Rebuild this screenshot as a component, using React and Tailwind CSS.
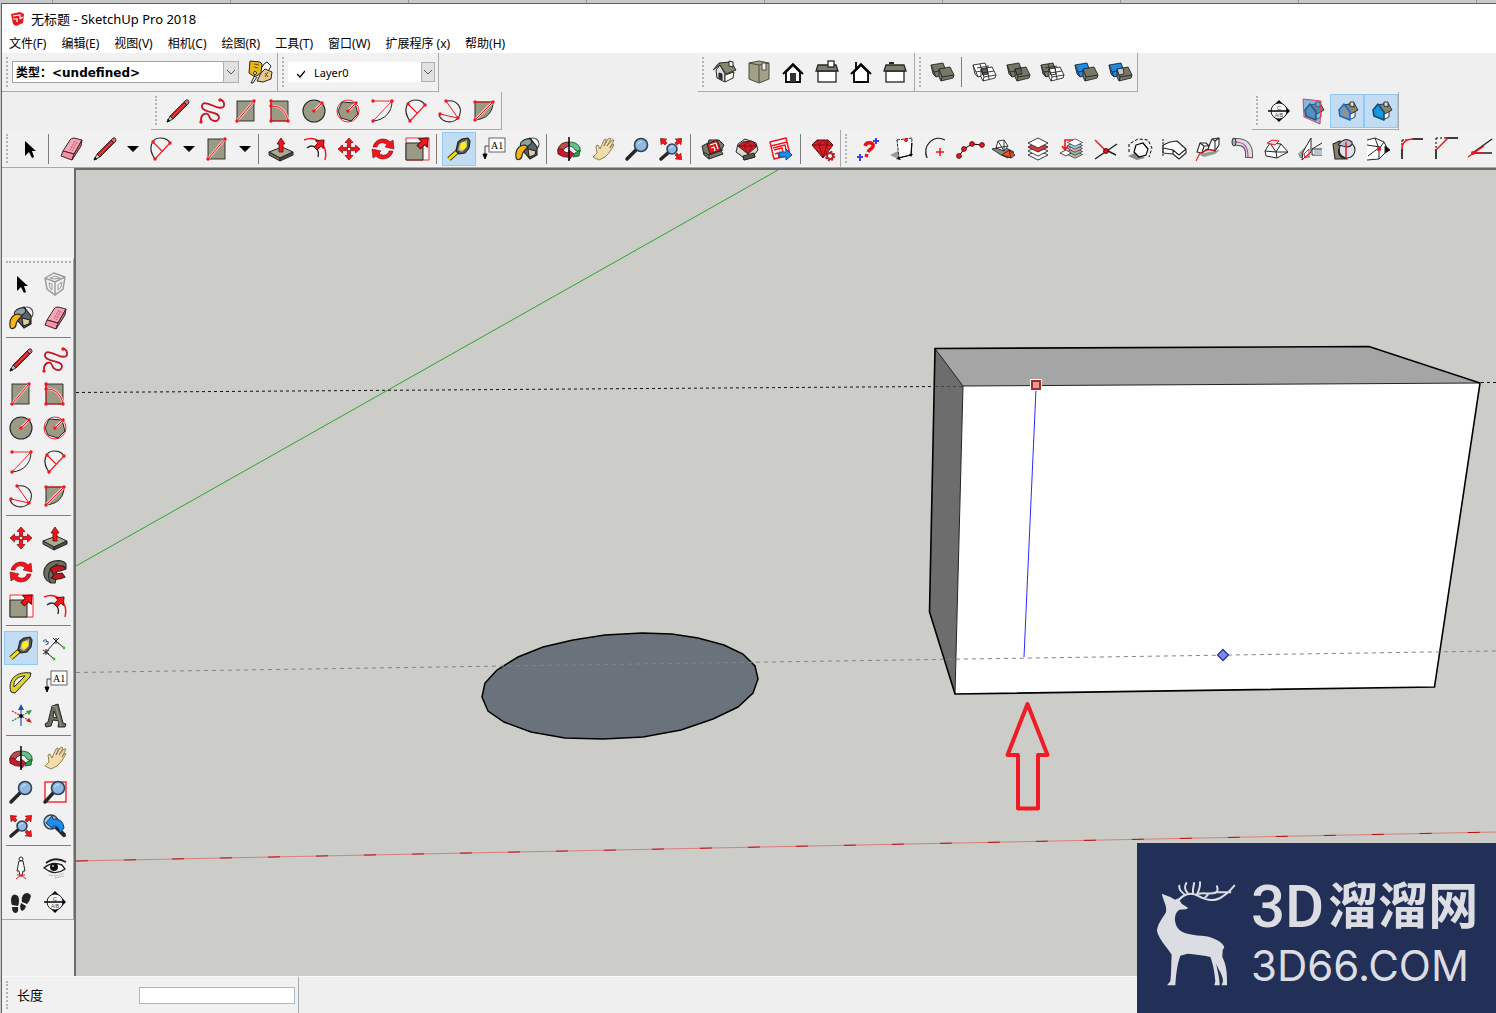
import React, { useState } from "react";

const RED = "#f5141e";
const CLAY = "#9b9a85";
const INK = "#262626";

const Dots = ({ points }) =>
  points.map(([x, y]) => <circle key={`${x},${y}`} cx={x} cy={y} r="1.7" fill={RED} />);

const Arrow = ({ turn = 0, x = 0, y = 0 }) => (
  <path
    transform={`translate(${x} ${y}) rotate(${turn})`}
    d="M0 -6 L5 0 L2 0 L2 5 L-2 5 L-2 0 L-5 0 Z"
    fill={RED}
    stroke="#5a0a0a"
    strokeWidth="0.8"
  />
);

const Lens = ({ x = 3, y = -3, r = 6 }) => (
  <g>
    <path d={`M${x - r * 0.7} ${y + r * 0.7} L-10 10`} stroke={INK} strokeWidth="3.5" strokeLinecap="round" />
    <circle cx={x} cy={y} r={r} fill="#8fb9e0" stroke="#2d4257" strokeWidth="1.6" />
    <path d={`M${x - r * 0.5} ${y - r * 0.1} Q${x - r * 0.3} ${y - r * 0.6} ${x + 1} ${y - r * 0.5}`} fill="none" stroke="#d5e8f8" />
  </g>
);

// two overlapping solids used by the solid tools toolbar
const Solids = ({ a = "#77776a", b = "#77776a", mid, wire }) => (
  <g stroke={INK} strokeWidth="0.9" strokeLinejoin="round">
    <path d="M-11 -7 L1 -9 L4 -1 L4 2 L-6 5 L-9 2 Z" fill={a} />
    <path d="M-11 -7 L-8 0 L3 -2 M-8 0 L-6 5" fill="none" />
    <path d="M-3 -3 L8 -5 L12 3 L11 6 L-1 9 L-3 5 Z" fill={b} />
    <path d="M-3 -3 L0 5 L12 3 M0 5 L-1 9" fill="none" />
    {mid && <path d="M-3 -3 L3 -4 L4 2 L-1 3 Z" fill={mid} />}
    {wire && <path d="M-7 -4 L5 -6 M-4 -8 L-1 3 M3 -4 L5 7 M-2 1 L10 -1" fill="none" />}
  </g>
);

const SectionHouse = ({ front, edge }) => (
  <g strokeLinejoin="round">
    <path d="M3 1 L8 -1 L8 6 L2 9 Z" fill="#fff" stroke={INK} strokeWidth="0.9" />
    <path d="M-3 -6 L7 -8 L11 -1 L4 3 Z" fill="#87866f" stroke={INK} strokeWidth="0.9" />
    <path d="M3 -9 L7 -9 L7 -4 L3 -5 Z" fill="#ddd" stroke={INK} strokeWidth="0.9" />
    <path d="M-8 -1 L-3 -7 L3 1 L3 9 L-7 5 Z" fill={front} stroke={edge} strokeWidth="1.6" />
  </g>
);

const Sheets = ({ fills }) => (
  <g stroke={INK} strokeWidth="0.9">
    {fills.map((fill, i) => (
      <path key={i} d={`M-10 ${6 - i * 4} L0 ${1 - i * 4} L10 ${6 - i * 4} L0 ${11 - i * 4} Z`} fill={fill} />
    ))}
  </g>
);

const ICONS = {
  select: <path d="M-4 -8 L-4 7 L0 3 L3 9 L5 8 L3 2 L7 2 Z" fill="#000" />,
  component: (
    <g fill="none" stroke="#9a9a9a" strokeWidth="1.4">
      <path d="M-10 -6 L-1 -11 L10 -7 L8 5 L0 11 L-8 5 Z M-10 -6 L0 -2 L10 -7 M0 -2 L0 11" />
      <path d="M-6 -1 L-5 4 L-3 6 L-3 0 Z M3 1 L7 -2 L6 3 L3 6 Z M-5 -6 L0 -8 L5 -6 L0 -5 Z" strokeWidth="1" />
    </g>
  ),
  paint: (
    <g strokeWidth="1.2" stroke={INK}>
      <circle cx="6" cy="-5" r="6" fill="none" stroke="#555" />
      <path d="M-6 -6 L3 -11 L10 -2 L10 6 L3 10 L-3 3 Z" fill="#5b6568" />
      <ellipse cx="-1" cy="-6" rx="6" ry="3.5" fill="#8b9fa4" transform="rotate(-25 -1 -6)" />
      <path d="M1 0 L9 2 L8 6 L2 8 Z" fill="#d9cfa0" />
      <path d="M-2 -4 C-8 -4 -12 1 -11 8 C-11 12 -6 11 -5 7 C-5 3 -2 1 1 -2 Z" fill="#fab410" />
    </g>
  ),
  eraser: (
    <g stroke="#3a2529" strokeWidth="1" strokeLinejoin="round">
      <path d="M-1 -9 Q0 -11 3 -11 L11 -9 L3 5 L-8 2 Z" fill="#f7a5b6" />
      <path d="M-8 2 L3 5 L1 11 L-10 7 Z" fill="#fb8fa5" />
      <path d="M11 -9 L10 -3 L1 11 L3 5 Z" fill="#d4697f" />
      <path d="M4 -8 L-1 1 M6 -7 L1 2" stroke="#a8506a" strokeDasharray="2 1" />
    </g>
  ),
  pencil: (
    <g stroke={INK} strokeWidth="0.9" strokeLinejoin="round">
      <path d="M-11 11 L-8 5 L-5 8 Z" fill="#d8c79a" />
      <path d="M-8 5 L6 -9 L9 -6 L-5 8 Z" fill="#c31f22" />
      <path d="M-6 6 L7 -7" stroke="#ff7465" strokeWidth="0.7" />
      <path d="M6 -9 L8 -11 Q11 -12 11 -8 L9 -6 Z" fill="#d46a72" />
      <path d="M-11 11 L-10 8 L-8 10 Z" fill="#000" />
    </g>
  ),
  freehand: (
    <g>
      <path
        d="M-11 11 C-12 3 -5 0 -3 5 C-1 11 7 12 7 6 C7 0 -11 2 -10 -5 C-10 -10 -3 -7 2 -5 C8 -2 13 -3 12 -7 C12 -10 9 -12 7 -11"
        fill="none"
        stroke="#c2182b"
        strokeWidth="1.8"
      />
      <Dots points={[[-11, 11], [8, -11]]} />
    </g>
  ),
  rectangle: (
    <g>
      <rect x="-9" y="-10" width="17" height="20" fill={CLAY} stroke={INK} strokeWidth="0.9" />
      <path d="M-9 10 L8 -10" stroke="#ffc9c9" strokeWidth="2.6" />
      <path d="M-9 10 L8 -10" stroke={RED} strokeWidth="1" />
      <Dots points={[[-9, 10], [8, -10]]} />
    </g>
  ),
  rotatedRect: (
    <g>
      <path d="M-9 -10 H8 V10 H-9 Z" fill={CLAY} stroke={INK} strokeWidth="0.9" />
      <path d="M-9 -5 Q4 -6 8 9" fill="none" stroke="#ffc9c9" strokeWidth="2.6" />
      <path d="M-9 -10 V10 H8 M-9 -5 Q4 -6 8 9" fill="none" stroke={RED} />
      <Dots points={[[-9, -10], [-9, -5], [-9, 10], [8, 10]]} />
    </g>
  ),
  circle: (
    <g>
      <circle r="11" fill={CLAY} stroke={INK} strokeWidth="1.1" />
      <path d="M0 0 L8 -8" stroke="#ffc9c9" strokeWidth="2.6" />
      <path d="M0 0 L8 -8" stroke={RED} />
      <Dots points={[[0, 0], [8, -8]]} />
    </g>
  ),
  polygon: (
    <g>
      <circle r="11" fill="none" stroke={RED} strokeWidth="0.9" />
      <path d="M-6 -9 L7 -8 L10 3 L3 10 L-7 7 L-10 0 Z" fill={CLAY} stroke={INK} strokeWidth="1" />
      <path d="M0 0 L8 -8" stroke="#ffc9c9" strokeWidth="2.6" />
      <path d="M0 0 L8 -8" stroke={RED} />
      <Dots points={[[0, 0], [8, -8]]} />
    </g>
  ),
  arc: (
    <g fill="none">
      <path d="M10 -10 C10 1 3 9 -9 10" stroke={INK} />
      <path d="M-9 -10 H10 L-9 10" stroke={RED} strokeWidth="0.9" />
      <Dots points={[[-9, -10], [10, -10], [-9, 10]]} />
    </g>
  ),
  arc2: (
    <g fill="none">
      <path d="M-6 10 C-14 -1 -9 -11 -1 -11 C4 -11 7 -10 9 -6" stroke={INK} strokeWidth="1.2" />
      <path d="M-6 10 L9 -6 M-8 -7 L1 2" stroke={RED} strokeWidth="1.1" />
      <Dots points={[[-6, 10], [9, -6], [-8, -7]]} />
    </g>
  ),
  arc3: (
    <g fill="none">
      <path d="M-4 -10 C8 -12 14 -2 8 7 C3 13 -8 12 -11 4" stroke={INK} strokeWidth="1.1" />
      <path d="M-4 -10 L8 7 L-10 3" stroke={RED} />
      <Dots points={[[-4, -10], [8, 7], [-10, 3]]} />
    </g>
  ),
  pie: (
    <g>
      <path d="M-9 -9 H9 C9 1 3 8 -9 9 Z" fill={CLAY} stroke={INK} strokeWidth="1" />
      <path d="M-9 9 L9 -9" stroke="#ffc9c9" strokeWidth="2.6" />
      <path d="M-9 -9 H9 L-9 9" fill="none" stroke={RED} />
      <Dots points={[[-9, -9], [9, -9], [-9, 9]]} />
    </g>
  ),
  pushPull: (
    <g stroke={INK} strokeWidth="1" strokeLinejoin="round">
      <path d="M-12 3 L1 -2 L12 3 L-1 9 Z" fill="#a9a892" />
      <path d="M-12 3 L-1 9 L-1 12 L-12 6 Z" fill="#6f6e5e" />
      <path d="M12 3 L-1 9 L-1 12 L12 6 Z" fill="#4d4c41" />
      <path d="M0 -11 L4 -5 H2 V3 H-2 V-5 H-4 Z" fill={RED} stroke="#5a0a0a" strokeWidth="0.8" />
    </g>
  ),
  offset: (
    <g fill="none">
      <path d="M-11 -9 C1 -14 14 -4 10 11" stroke={RED} strokeWidth="1.4" />
      <path d="M-8 -1 C-2 -6 5 0 3 8" stroke={INK} strokeWidth="1.3" />
      <g transform="scale(1.1)"><Arrow turn={45} x={4} y={-4} /></g>
    </g>
  ),
  move: (
    <g>
      {[0, 90, 180, 270].map((turn) => (
        <path key={turn} transform={`rotate(${turn})`} d="M0 -11 L4 -6.5 L1.6 -6.5 L1.6 -1.6 L-1.6 -1.6 L-1.6 -6.5 L-4 -6.5 Z" fill={RED} stroke="#7d0a0a" strokeWidth="0.7" />
      ))}
    </g>
  ),
  rotate: (
    <g fill={RED} stroke="#7d0a0a" strokeWidth="0.6">
      <path d="M-10 -2 C-8 -11 3 -12 7 -7 L10 -9 L11 0 L2 -2 L4 -4 C0 -8 -5 -6 -6 -2 Z" />
      <path d="M10 2 C8 11 -3 12 -7 7 L-10 9 L-11 0 L-2 2 L-4 4 C0 8 5 6 6 2 Z" />
    </g>
  ),
  scale: (
    <g>
      <path d="M-11 -11 H12 V11 H-11 Z" fill="#fff" fillOpacity="0.5" stroke={RED} strokeWidth="0.9" />
      <path d="M-11 -6 H6 V11 H-11 Z" fill={CLAY} stroke={INK} strokeWidth="1" />
      <g transform="scale(1.2)"><Arrow turn={45} x={5} y={-5} /></g>
    </g>
  ),
  followMe: (
    <g stroke={INK} strokeWidth="1.1" strokeLinejoin="round">
      <path d="M-4 11 C-15 7 -13 -8 -1 -11 C5 -12 9 -11 11 -8 L11 -4 C4 -7 -1 -4 -2 2 L1 7 L0 11 Z" fill="#706f60" />
      <path d="M-4 11 C-9 4 -6 -5 3 -8" fill="none" />
      <path d="M-5 -3 Q0 -8 8 -6 L11 -3 L5 -1 Q1 -1 1 2 L7 1 L10 5 Q2 9 -4 6 L-1 3 Z" fill="#c6161c" />
    </g>
  ),
  tape: (
    <g strokeLinejoin="round">
      <path d="M-10 10 L-1 2" stroke="#4a3f00" strokeWidth="5" />
      <path d="M-10 10 L-1 2" stroke="#f4e20c" strokeWidth="3" />
      <path d="M-1 -7 L3 -10 L9 -11 L11 -8 L10 -1 L6 4 L0 5 L-3 2 Z" fill="#55554c" stroke={INK} strokeWidth="1.2" />
      <path d="M1 -6 L8 -9 L8 -2 L3 3 L-1 1 Z" fill="#b8b697" />
      <ellipse cx="4" cy="-3" rx="3" ry="4" fill="#fbf01d" transform="rotate(25 4 -3)" />
    </g>
  ),
  dimension: (
    <g stroke={INK} fill="none">
      <path d="M-9 4 L1 -7 M-9 4 L-1 11 M1 -7 L9 0" strokeWidth="1" />
      <path d="M-12 2 L-6 6 M-12 6 L-6 2 M-9 1 V7 M-2 -10 L4 -4 M-2 -4 L4 -10 M1 -10 V-4" />
      <text x="-11" y="-4" fontSize="8" stroke="none" fill="#000" fontFamily="Liberation Sans" transform="rotate(-45 -8 -6)">3</text>
      <circle cx="-1" cy="11" r="1.4" fill="#31c141" stroke="none" />
      <circle cx="9" cy="0" r="1.4" fill="#31c141" stroke="none" />
    </g>
  ),
  protractor: (
    <g strokeLinejoin="round" stroke={INK} strokeWidth="1">
      <path fillRule="evenodd" d="M-10 10 C-14 -3 -4 -11 10 -9 L9 -5 L-6 11 Z M-7 5 L4 -6 C-3 -6 -8 -2 -7 5 Z" fill="#ded22b" />
    </g>
  ),
  text: (
    <g>
      <rect x="-4" y="-11" width="16" height="14" fill="#fff" stroke="#555" strokeWidth="0.9" />
      <text x="-2" y="0" fontSize="10" fontFamily="Liberation Serif" fill="#000">A1</text>
      <path d="M-4 -3 H-8 V6" fill="none" stroke="#444" />
      <path d="M-10 5 L-6 5 L-8 10 Z" fill="#000" stroke="#000" />
    </g>
  ),
  axes: (
    <g strokeWidth="1.3">
      <path d="M-9 -5 L9 5" stroke="#d52b2b" strokeDasharray="2 1" />
      <path d="M-9 5 L8 -4" stroke="#2d9b3a" strokeDasharray="2 1" />
      <path d="M0 10 L0 -6" stroke="#2a63c4" />
      <path d="M-3 -6 L0 -12 L3 -6 Z" fill="#2352a6" />
      <path d="M11 -6 L5 -5 L8 -1 Z" fill="#2d9b3a" />
      <path d="M11 7 L5 5 L8 2 Z" fill="#c51c1c" />
      <circle r="2" fill="#111" />
    </g>
  ),
  text3d: (
    <g stroke={INK} strokeWidth="1" strokeLinejoin="round">
      <path d="M-10 8 L-7 6 L-3 -10 L3 -12 L8 7 L11 8 L10 11 L3 11 L4 5 L-2 4 L-4 10 L-9 11 Z" fill="#6e6d5f" />
      <path d="M-1 -5 L-2 1 L2 2 Z" fill="#efefef" />
      <path d="M-3 -10 L1 -9 L6 10" fill="none" stroke="#aaa" strokeWidth="0.8" />
    </g>
  ),
  orbit: (
    <g strokeLinejoin="round" strokeWidth="0.9">
      <path d="M-11 0 Q-9 -7 0 -7 L0 -3 Q-5 -2 -6 2 L-11 3 Z" fill="#bb4a4c" stroke="#5c1212" />
      <path d="M0 -7 Q9 -7 11 -1 L11 3 L6 1 Q5 -3 0 -3 Z" fill="#67c089" stroke="#155b31" />
      <path d="M-11 0 L-11 5 Q-6 9 0 8 L0 11 L5 5 L0 1 L0 4 Q-5 4 -7 0 Z" fill="#c71a2e" stroke="#5c1212" />
      <path d="M11 1 L10 7 L4 8 L6 4 Z" fill="#2f9c55" stroke="#155b31" />
      <path d="M0 -12 V12" stroke="#111" strokeWidth="1.6" />
    </g>
  ),
  pan: (
    <path
      d="M-10 8 L-6 4 L-7 -3 L-5 -4 L-3 0 L1 -9 L3 -10 L3 -8 L1 -3 L5 -10 L7 -11 L8 -10 L4 -3 L9 -9 L11 -9 L7 -1 L10 -5 L11 -4 L6 4 L2 8 L-4 11 Z"
      fill="#f1dcae"
      stroke="#8b7444"
      strokeWidth="0.9"
      strokeLinejoin="round"
    />
  ),
  zoom: <Lens x={4} y={-4} r={6.5} />,
  zoomWindow: (
    <g>
      <rect x="-10" y="-10" width="21" height="20" fill="#fff" fillOpacity="0.4" stroke={RED} strokeWidth="1.3" />
      <Lens x={3} y={-4} r={6.5} />
    </g>
  ),
  zoomExtents: (
    <g>
      <Lens x={1} y={0} r={5} />
      {[45, 135, 315].map((turn) => (
        <path key={turn} transform={`rotate(${turn})`} d="M0 -15 L4 -10 L1.5 -10 L1.5 -7 L-1.5 -7 L-1.5 -10 L-4 -10 Z" fill={RED} stroke="#7d0a0a" strokeWidth="0.6" />
      ))}
    </g>
  ),
  previous: (
    <g strokeLinejoin="round">
      <circle cx="-4" cy="-4" r="7" fill="#a9c9e8" stroke="#2d4257" strokeWidth="1.4" />
      <path d="M2 2 L9 9" stroke={INK} strokeWidth="4" strokeLinecap="round" />
      <path d="M-9 -3 L-3 -10 L-2 -7 Q8 -8 9 2 L5 7 Q4 -1 -2 0 L-2 3 Z" fill="#1f8bea" stroke="#123a66" strokeWidth="1" />
    </g>
  ),
  camera: (
    <g fill="#fff" stroke={INK} strokeWidth="1">
      <circle cx="0" cy="-9" r="2" />
      <path d="M-2 -7 L2 -7 L4 3 L2 3 L1 8 L-1 8 L-2 3 L-4 3 Z" />
      <path d="M-5 11 L0 7 L5 11 M-4 7 L4 7" fill="none" stroke={RED} />
    </g>
  ),
  look: (
    <g>
      <path d="M-9 -5 Q0 -12 11 -6" fill="none" stroke="#222" strokeWidth="1.8" />
      <path d="M-11 0 Q-3 -7 7 -3 L10 1 Q2 7 -6 3 Z" fill="#fff" stroke="#222" strokeWidth="1.4" />
      <circle cx="-1" cy="-1" r="4" fill="#111" />
      <circle cx="-2" cy="-2" r="1" fill="#ccc" />
      <path d="M-6 7 Q2 9 9 5 M0 10 L9 8" fill="none" stroke="#999" strokeDasharray="1.5 1" />
    </g>
  ),
  walk: (
    <g fill="#222">
      <path d="M-9 -6 Q-7 -9 -3 -6 Q-1 -1 -3 4 L-9 3 Q-11 -2 -9 -6 Z M-9 5 L-3 5 Q-2 10 -5 11 Q-9 11 -9 5 Z" />
      <path d="M3 -8 Q8 -11 10 -6 Q9 -1 6 2 L1 0 Q0 -5 3 -8 Z M0 1 L5 4 Q4 8 1 9 Q-2 7 0 1 Z" />
    </g>
  ),
  section: (
    <g>
      <path d="M-4 -7 L0 -11 L4 -7 L11 0 L4 7 L0 11 L-4 7 Z" fill="#000" />
      <circle r="8" fill="#f7f7f7" stroke="#222" strokeWidth="1" />
      <path d="M-11 0 H10" stroke="#000" strokeWidth="1.5" />
      <text x="0" y="-1.5" fontSize="6" textAnchor="middle" fill="#444" fontFamily="Liberation Sans">C</text>
      <text x="0" y="6" fontSize="5" textAnchor="middle" fill="#444" fontFamily="Liberation Sans">A/B</text>
    </g>
  ),
  sectionPlanes: (
    <g>
      <SectionHouse front="#7aa0b8" edge={INK} />
      <path d="M-10 -12 L8 -10 L7 13 L-9 6 Z" fill="#2f83c9" fillOpacity="0.55" stroke="#e0405a" strokeWidth="1" />
    </g>
  ),
  sectionCuts: <SectionHouse front="#8b9397" edge="#0c6fe0" />,
  sectionFill: <SectionHouse front="#1597de" edge="#124e77" />,
  tags: (
    <g stroke={INK} strokeWidth="1" strokeLinejoin="round">
      <path d="M-1 0 L4 -8 L7 -10 L11 -6 L6 3 Z" fill="#fff" />
      <path d="M-3 9 L1 1 L5 -3 L12 0 L11 7 L3 10 Z" fill="#e6c98e" />
      <path d="M-10 -11 L0 -10 L2 -8 L1 1 L-5 5 L-11 1 Z" fill="#e8b913" />
      <path d="M-6 -8 L-1 -7 M-6 -5 L-2 -4 M5 1 L8 5 M8 0 L5 5" stroke="#6d5200" />
      <circle cx="-5" cy="1" r="1.5" fill="#fff" />
      <path d="M-5 3 L-9 11 L-7 11 L-3 5" fill="none" />
    </g>
  ),
  iso: (
    <g stroke={INK} strokeWidth="1" strokeLinejoin="round">
      <path d="M-9 -2 L-5 -7 L0 2 L0 10 L-8 6 Z" fill="#ddd" />
      <path d="M0 3 L9 0 L8 6 L0 10 Z" fill="#fff" />
      <path d="M-12 -2 L-6 -9 L6 -10 L11 -2 L1 2 L-5 -7 Z" fill="#87866f" />
      <path d="M4 -11 L8 -10 L8 -5 L4 -6 Z" fill="#eee" />
      <path d="M-6 1 L-3 2 L-3 8 L-6 6 Z" fill="#333" />
    </g>
  ),
  top: (
    <g stroke="#4c4b3d" strokeWidth="1" strokeLinejoin="round">
      <path d="M-10 -9 L0 -11 L10 -9 V7 L0 11 L-10 7 Z" fill="#a2a088" />
      <path d="M0 -7 V11 M-10 -9 L0 -7 L10 -9" fill="none" />
      <rect x="3" y="-9" width="4" height="7" fill="#eee" />
    </g>
  ),
  front: (
    <g fill="#fff" stroke="#000" strokeWidth="1.8">
      <path d="M-7 0 V10 H7 V0 L0 -7 Z" />
      <path d="M-10 2 L0 -8 L10 2" fill="none" />
      <rect x="-3" y="1" width="6" height="9" fill="#333" stroke="none" />
    </g>
  ),
  right: (
    <g stroke={INK} strokeWidth="1.3">
      <rect x="-9" y="-1" width="18" height="11" fill="#fff" />
      <path d="M-9 -7 H9 L11 -1 H-11 Z" fill="#7d7c69" />
      <rect x="1" y="-11" width="6" height="6" fill="#fff" />
    </g>
  ),
  back: (
    <g fill="#fff" stroke="#000" strokeWidth="1.8">
      <path d="M-5 -3 V-10" />
      <path d="M-7 0 V10 H7 V0 L0 -7 Z" />
      <path d="M-10 2 L0 -8 L10 2" fill="none" />
    </g>
  ),
  left: (
    <g stroke={INK} strokeWidth="1.3">
      <rect x="-9" y="-1" width="18" height="11" fill="#fff" />
      <path d="M-9 -7 H9 L11 -1 H-11 Z" fill="#7d7c69" />
      <path d="M-6 -9 H-1" strokeWidth="2" />
    </g>
  ),
  shell: <Solids />,
  intersect: <Solids a="#fff" b="#fff" mid="#5f5f52" wire />,
  union: <Solids mid="#5d5c50" />,
  subtract: <Solids b="#fff" mid="#fff" wire />,
  trim: <Solids a="#1a8ae6" />,
  split: <Solids a="#1a8ae6" mid="#c9c9c9" />,
  warehouse: (
    <g stroke={INK} strokeWidth="1" strokeLinejoin="round">
      <path d="M-11 -3 L-5 -6 L-4 -9 L6 -9 L11 -4 L8 2 L10 5 L-4 10 L-9 6 Z" fill="#77776a" />
      <path d="M-10 3 L-4 6 L10 1 M-4 6 V10" fill="none" />
      <path d="M-6 -5 L4 -9 L8 1 L-3 5 Z" fill="#e0191f" />
      <path d="M-3 -4 L3 -6 L5 0 M-2 -1 L1 -2 L2 2" fill="none" stroke="#fff" strokeWidth="1.2" />
    </g>
  ),
  extensionWarehouse: (
    <g stroke={INK} strokeWidth="1" strokeLinejoin="round">
      <path d="M-9 -5 L-2 -10 L9 -6 L11 1 L7 6 L8 8 L-3 11 L-4 8 L-11 3 Z" fill="#d7d7d2" />
      <path d="M-4 7 L7 4 L8 8 L-3 11 Z" fill="#55554c" />
      <path d="M-9 -3 L-4 -7 L5 -8 L10 -3 L1 5 Z" fill="#cc1f27" />
      <path d="M-9 -3 H10 M-3 -3 L1 5 L5 -3 L0 -7 Z" fill="none" stroke="#7a0a10" strokeWidth="0.8" />
    </g>
  ),
  layout: (
    <g strokeLinejoin="round">
      <path d="M-11 -7 L5 -11 L9 6 L-7 10 Z" fill="#fff" stroke={RED} strokeWidth="1.5" />
      <path d="M-10 -3 L6 -7 M-7 1 L1 -1 L3 7 M-6 5 L-3 4 L-2 8 M-8 -1 L4 -4 L5 1" fill="none" stroke={RED} strokeWidth="1.4" />
      <path d="M-2 3 H5 V0 L11 6 L5 11 V8 H-2 Z" fill="#1d8bed" stroke="#17497c" />
    </g>
  ),
  extensionManager: (
    <g strokeLinejoin="round">
      <path d="M-11 -4 L-6 -9 L5 -9 L10 -4 L0 9 Z" fill="#d41f27" stroke="#5a0a0e" />
      <path d="M-11 -4 H10 M-4 -4 L0 8 L4 -4 M-6 -9 L-4 -4 L0 -9 L4 -4 L5 -9" fill="none" stroke="#7a0a10" strokeWidth="0.9" />
      <circle cx="7" cy="7" r="3" fill="#eee" stroke="#b02028" strokeWidth="2" />
      <circle cx="7" cy="7" r="4.5" fill="none" stroke="#b02028" strokeWidth="1.5" strokeDasharray="2 1.5" />
    </g>
  ),
  help: (
    <g fill="none">
      <path d="M-3 -3 Q-2 -7 3 -6 Q7 -5 4 -1 Q1 1 0 3 M-1 5 L-2 8" stroke="#ee1111" strokeWidth="3.4" />
      <path d="M-8 5 V12 M-11 8 H-5 M8 -11 V-5 M5 -8 H11" stroke="#3d3de8" strokeWidth="2" />
    </g>
  ),
  sheet: (
    <g strokeLinejoin="round">
      <path d="M-12 6 L-4 2 L-2 9 L-4 10 Z" fill="#999" />
      <path d="M-5 -9 L10 -11 L9 6 L-3 9 Z" fill="#fff" stroke={INK} strokeDasharray="3 1" />
      <path d="M-4 9 L9 6 L10 -6" fill="none" stroke="#000" strokeWidth="1.1" />
      <path d="M-6 10 L-3 8 L-1 11 Z M7 5 L11 5 L9 8 Z" fill="#000" />
      <circle cx="4" cy="-9" r="2" fill={RED} />
    </g>
  ),
  arcCenter: (
    <g fill="none">
      <path d="M9 -9 C-2 -15 -14 -4 -9 9" stroke={INK} strokeWidth="1.3" />
      <path d="M4 -1 V7 M0 3 H8" stroke={RED} strokeWidth="1.6" />
    </g>
  ),
  polyline: (
    <g>
      <path d="M-11 7 L-6 0 L2 -5 L12 -4" fill="none" stroke="#000" />
      {[[-11, 7], [-6, 0], [2, -5], [12, -4]].map(([x, y]) => (
        <circle key={x} cx={x} cy={y} r="2.4" fill={RED} stroke="#400" strokeWidth="0.8" />
      ))}
    </g>
  ),
  facet: (
    <g stroke={INK} strokeWidth="0.9" strokeLinejoin="round">
      <path d="M-12 0 L0 -2 L10 3 L4 9 L-3 6 Z" fill="#888" />
      <path d="M-8 -1 L-6 -8 L0 -9 L4 -3 L0 2 Z" fill="#fff" />
      <path d="M-8 -1 L4 -3 M-6 -8 L0 2 L0 -9" fill="none" />
      <path d="M-2 6 L5 1 L11 6 L7 9 Z M5 1 L7 9" fill="#ff4a16" />
    </g>
  ),
  layersRed: <Sheets fills={["#fff", "#fff", "#e2383c", "#fff"]} />,
  layersColor: (
    <g>
      <g transform="translate(3 1) scale(.75)">
        <Sheets fills={["#bbb", "#8fc388", "#efa4b8", "#84d3ef", "#fff"]} />
      </g>
      <path d="M1 -9 H-7 V0 M-10 -3 L-7 1 L-4 -3" fill="none" stroke={RED} strokeWidth="1.6" />
      <path d="M-12 4 L-6 1 L-1 4 L-6 7 Z" fill="#fff" stroke={INK} strokeWidth="0.8" />
    </g>
  ),
  trimLines: (
    <g fill="none">
      <path d="M-11 10 L11 -5 M0 1 L10 6" stroke="#222" strokeWidth="1.4" />
      <path d="M-11 -9 L0 2" stroke={RED} strokeWidth="1.4" />
      <circle cx="0" cy="2" r="2.4" fill={RED} stroke="#400" />
    </g>
  ),
  hexDash: (
    <g>
      <path d="M-12 7 L-3 3 L5 9 L-3 11 Z" fill="#888" />
      <path d="M-4 -4 L3 -6 L8 0 L6 6 L-1 8 L-6 3 Z" fill="#fff" stroke="#000" strokeWidth="1.2" />
      <path d="M-11 3 L-11 -5 L-2 -10 L8 -9 L12 -1 L9 8" fill="none" stroke="#000" strokeDasharray="3 2" />
    </g>
  ),
  extrude: (
    <g fill="#fff" stroke={INK} strokeWidth="1.1" strokeLinejoin="round">
      <path d="M-11 -4 L-4 -7 L3 -8 L12 0 L12 4 L5 10 L-1 5 L-11 4 Z" />
      <path d="M-11 -1 L-1 1 L5 6 L12 0 M-1 1 V5" fill="none" />
      <path d="M-11 -10 V8" strokeDasharray="2 1" />
    </g>
  ),
  followPath: (
    <g stroke={INK} strokeWidth="1.1" strokeLinejoin="round">
      <path d="M-10 5 L1 3 L12 1 L7 5 L-4 8 Z" fill="#999" stroke="none" />
      <path d="M-11 3 L-8 -6 L-2 -6 L1 -3 L4 -10 L11 -11 L11 -4 L7 2 L-1 0 L-6 4 Z" fill="#fff" />
      <path d="M-8 -6 L-4 -3 L-6 4 M-4 -3 L1 -3 L0 1 M4 -10 L7 -8 L11 -11 M7 -8 L7 2" fill="none" />
      <path d="M-12 12 L-8 4 L0 1 L8 1" fill="none" stroke={RED} />
    </g>
  ),
  pipe: (
    <g fill="none">
      <path d="M-9 -7 C3 -8 8 -3 7 9" stroke="#555" strokeWidth="8" />
      <path d="M-8 -7 C3 -8 8 -3 7 8" stroke="#dedede" strokeWidth="6" />
      <path d="M-7 -7 C2 -7 6 -3 6 8" stroke="#c43ba0" strokeWidth="1.1" />
      <ellipse cx="-8" cy="-7" rx="2" ry="4" fill="#aab" stroke="#333" />
    </g>
  ),
  dome: (
    <g fill="#fff" stroke={INK} strokeWidth="1" strokeLinejoin="round">
      <path d="M-11 2 L-6 -6 L5 -5 L12 3 L1 9 L-10 7 Z" />
      <path d="M-11 2 L0 3 L12 3 M-6 -6 L0 3 L1 9 M5 -5 L0 3" fill="none" />
      <path d="M-9 -6 L-4 -9 L3 -8 L-1 -4 Z" fill="#ffd9d9" stroke={RED} />
    </g>
  ),
  mirror: (
    <g strokeLinejoin="round" strokeWidth="1">
      <path d="M-12 5 L0 -7 L0 9 L-10 9 Z" fill="#999" />
      <path d="M-7 3 L1 -11 L1 3 L-8 11 Z" fill="#fff" stroke={INK} />
      <path d="M-6 5 L-1 0 L-1 5 L-5 9 Z" fill="none" stroke={RED} />
      <path d="M2 0 L12 -6 M2 0 H12 M2 6 L12 6 M2 0 V6" stroke={INK} />
      <path d="M4 1 H12 V6 H4 Z" fill="#b9c4cd" />
    </g>
  ),
  wrap: (
    <g stroke={INK} strokeWidth="1.1">
      <path d="M-11 -5 L-4 -8 L0 2 L3 10 L-9 10 Z" fill="#84846f" />
      <circle cx="3" cy="1" r="8" fill="#dfe4ee" />
      <path d="M-6 -4 Q1 -13 8 -7 Q9 -3 3 -2 Z" fill="#b6c2dc" />
      <path d="M2 -7 V8" stroke={RED} strokeWidth="1.5" />
      <path d="M-5 0 Q-6 8 1 9" fill="none" strokeWidth="2" />
    </g>
  ),
  projection: (
    <g fill="#fff" stroke={INK} strokeWidth="1" strokeLinejoin="round">
      <path d="M-11 -9 L-3 -11 L6 -7 L10 1 L1 10 L-11 11" />
      <path d="M-11 -4 L2 -2 L-10 7 M-3 -11 L1 0 L1 10 M6 -7 L1 0" fill="none" />
      <path d="M7 -3 L12 1 L7 4 Z" fill="#000" />
      <circle cx="1" cy="0" r="2.2" fill={RED} stroke="none" />
    </g>
  ),
  fillet: (
    <g fill="none">
      <path d="M-10 -9 H-4 M-10 -9 V-4" stroke="#000" strokeDasharray="2 1" />
      <path d="M-10 10 V0 M0 -10 H11" stroke="#000" strokeWidth="1.5" />
      <path d="M-10 0 Q-10 -10 2 -10" stroke={RED} strokeWidth="1.6" />
    </g>
  ),
  chamfer: (
    <g fill="none">
      <path d="M-10 -11 H2 M-10 -11 V0" stroke="#000" strokeDasharray="2 2" />
      <path d="M-10 10 V0 M0 -11 H12" stroke="#000" strokeWidth="1.5" />
      <path d="M-10 1 L2 -11" stroke={RED} strokeWidth="1.4" />
    </g>
  ),
  angle: (
    <g fill="none">
      <path d="M-6 3 L12 -10 M-6 4 H12" stroke="#222" strokeWidth="1.4" />
      <path d="M-12 8 L4 -3 M-6 4 H3" stroke={RED} strokeWidth="1.5" />
      <circle cx="-7" cy="4" r="2" fill={RED} />
    </g>
  ),
};

const ToolButton = ({ name, active, onClick }) => (
  <button
    type="button"
    aria-label={name}
    onClick={onClick}
    className={`flex h-[34px] w-[34px] shrink-0 items-center justify-center border ${
      active ? "border-[#90c8f6] bg-[#c2ddf3]" : "border-transparent hover:bg-[#dcebf7]"
    }`}
  >
    <svg viewBox="-12 -12 24 24" className="h-6 w-6 overflow-visible">
      {ICONS[name]}
    </svg>
  </button>
);

const Grip = () => (
  <div className="flex h-full w-[10px] shrink-0 justify-center py-1">
    <div className="w-0 border-l-2 border-dotted border-[#b4b4b4]" />
  </div>
);

const Separator = () => (
  <div className="flex h-[30px] w-2 shrink-0 pl-[2px]">
    <div className="w-px bg-[#7d7d7d]" />
  </div>
);

const DropArrow = () => (
  <button type="button" aria-label="more" className="flex h-[34px] w-[22px] shrink-0 items-center justify-center">
    <svg viewBox="0 0 12 6" className="h-[6px] w-3">
      <path d="M0 0 H12 L6 6 Z" fill="#000" />
    </svg>
  </button>
);

const Panel = ({ className = "", children }) => (
  <div className={`flex h-full shrink-0 items-center border-r border-b border-[#a9a9a9] bg-[#f1f1f1] ${className}`}>
    <Grip />
    {children}
  </div>
);

const Tools = ({ names, active, setActive }) =>
  names.map((name, i) => {
    if (name === "|") return <Separator key={i} />;
    if (name === "v") return <DropArrow key={i} />;
    return <ToolButton key={i} name={name} active={active === name} onClick={() => setActive(name)} />;
  });

const Chevron = ({ className }) => (
  <span className={`pointer-events-none absolute flex items-center justify-center border border-[#adadad] bg-[#e1e1e1] ${className}`}>
    <svg viewBox="0 0 8 5" className="h-[5px] w-2">
      <path d="M0 0 L4 4 L8 0" fill="none" stroke="#555" />
    </svg>
  </span>
);

const MENUS = ["文件(F)", "编辑(E)", "视图(V)", "相机(C)", "绘图(R)", "工具(T)", "窗口(W)", "扩展程序 (x)", "帮助(H)"];

const DRAW_TOOLS = ["pencil", "freehand", "rectangle", "rotatedRect", "circle", "polygon", "arc", "arc2", "arc3", "pie"];

const MAIN_TOOLS = [
  "select", "|", "eraser", "pencil", "v", "arc2", "v", "rectangle", "v", "|",
  "pushPull", "offset", "move", "rotate", "scale", "|", "tape", "text", "paint", "|",
  "orbit", "pan", "zoom", "zoomExtents", "|", "warehouse", "extensionWarehouse", "layout", "|", "extensionManager",
];

const PLUGIN_TOOLS = [
  "help", "sheet", "arcCenter", "polyline", "facet", "layersRed", "layersColor", "trimLines", "hexDash", "extrude",
  "followPath", "pipe", "dome", "mirror", "wrap", "projection", "fillet", "chamfer", "angle",
];

const PALETTE = [
  ["select", "component", "paint", "eraser"],
  ["pencil", "freehand", "rectangle", "rotatedRect", "circle", "polygon", "arc", "arc2", "arc3", "pie"],
  ["move", "pushPull", "rotate", "followMe", "scale", "offset"],
  ["tape", "dimension", "protractor", "text", "axes", "text3d"],
  ["orbit", "pan", "zoom", "zoomWindow", "zoomExtents", "previous"],
  ["camera", "look", "walk", "section"],
];

const Scene = () => (
  <svg viewBox="76 170 1420 806" preserveAspectRatio="xMinYMin slice" className="block h-full w-full">
    <path d="M76 566 L778 170" stroke="#2ba52b" fill="none" />
    <path d="M76 861 L1496 832" stroke="#d87f7d" fill="none" />
    <path d="M76 861 L1496 832" stroke="#b51010" fill="none" strokeDasharray="12 36" />
    <path d="M76 392.5 L935 386.5 M1481 382.5 H1496" stroke="#111" strokeDasharray="3 3" />
    <polygon
      points="482,697 485,683 497,670 518,657 543,647 573,640 605,635 642,633 672,634 698,638 724,645 743,654 755,666 758,679 753,693 738,707 713,719 681,730 643,737 603,739 565,738 531,732 504,722 488,711"
      fill="#6a737b"
      stroke="#000"
      strokeWidth="1.5"
    />
    <polygon points="935,348.5 1369,346.5 1480,383 963,386" fill="#a5a5a5" />
    <polygon points="935,348.5 963,386 955,694 929.5,612" fill="#6d6d6d" />
    <polygon points="963,386 1480,383 1434.5,687 955,694" fill="#fff" />
    <path d="M935 348.5 L963 386 L955 694 M963 386 L1480 383" fill="none" stroke="#222" />
    <polygon points="935,348.5 1369,346.5 1480,383 1434.5,687 955,694 929.5,612" fill="none" stroke="#000" strokeWidth="1.6" />
    <path d="M935 386.5 H963" stroke="#444" strokeDasharray="3 3" />
    <path d="M76 672.5 L1496 651" stroke="#858585" strokeDasharray="4 4" />
    <path d="M1036 389 L1024 657" stroke="#2a2aff" />
    <rect x="1030" y="379" width="12" height="12" fill="#fff" />
    <rect x="1032" y="381" width="8" height="8" fill="#e39a90" stroke="#a52a2a" strokeWidth="2" />
    <path d="M1223 649.5 L1228.5 655 L1223 660.5 L1217.5 655 Z" fill="#7c89e6" stroke="#2a2fa0" strokeWidth="1.3" />
    <path d="M1027.5 704 L1047.5 755 H1038 V808.5 H1018 V755 H1007.5 Z" fill="none" stroke="#ee1c24" strokeWidth="4" strokeLinejoin="round" />
  </svg>
);

const Watermark = () => (
  <div className="absolute right-0 bottom-0 flex h-[170px] w-[359px] gap-3 bg-[#222f56] pt-7 pl-4 text-[#dcdde3]">
    <svg viewBox="66 106 258 339" className="mt-1 h-[113px] w-[86px] shrink-0" fill="currentColor">
      <path d="M92 162 L118 172 L132 180 L142 176 L152 192 L172 205 L165 209 L145 210 C130 222 128 240 138 262 C150 285 190 286 225 290 C255 296 275 310 280 322 L275 332 L274 352 C286 375 289 400 288 437 L272 437 L276 425 C276 405 262 390 255 372 C262 400 266 420 266 437 L250 437 L253 425 C250 390 245 370 238 352 C215 345 190 345 170 342 L148 348 C140 370 135 400 133 437 L108 437 L118 425 C122 395 120 370 122 345 C105 320 85 300 78 275 C78 255 95 235 105 218 C108 200 100 190 92 162 Z" />
      <path
        d="M142 182 C155 165 180 155 200 168 C230 185 255 185 275 170 C290 162 300 150 310 138 M160 164 C150 155 143 150 145 138 M170 160 C160 150 160 140 166 130 M186 158 C184 145 190 135 189 130 M198 164 C205 150 208 140 207 128 M202 162 C222 158 240 166 254 158 L298 158 M252 160 C262 155 260 148 258 140 M220 176 L230 166"
        fill="none"
        stroke="currentColor"
        strokeWidth="6"
        strokeLinecap="round"
      />
    </svg>
    <div className="flex flex-col pt-1">
      <div className="flex h-[64px] items-center gap-1 font-['Roboto','Noto_Sans_CJK_SC',sans-serif]">
        <span className="text-[60px] leading-[64px] font-medium">3D</span>
        <span className="text-[50px] leading-[64px] font-bold">溜溜网</span>
      </div>
      <div className="pt-[2px] font-['Inter',sans-serif] text-[42px] leading-[50px] font-normal">3D66.COM</div>
    </div>
  </div>
);

const App = () => {
  const [active, setActive] = useState("tape");
  const [length, setLength] = useState("");

  return (
    <div className="relative flex h-screen flex-col overflow-hidden bg-[#c9c9c9] font-['Noto_Sans','Noto_Sans_CJK_SC',sans-serif] text-xs text-black">
      {/* edge of the window behind */}
      <div className="flex h-[3px] shrink-0">
        <div className="w-[53px] shrink-0 border-r border-[#999]" />
        {[...Array(9)].map((_, i) => (
          <div key={i} className="w-[178px] shrink-0 border-r border-[#999]" />
        ))}
      </div>

      <div className="ml-px flex min-h-0 flex-1 flex-col border-t border-l border-[#5f6165] bg-[#efefef]">
        <header className="shrink-0 bg-white">
          <div className="flex h-7 items-center gap-[6px] pt-[2px] pl-[9px]">
            <svg viewBox="0 0 14 14" className="h-[14px] w-[14px]">
              <path d="M0 2 L9 0 L13 2 L12 11 L5 14 L2 12 Z" fill="#e21b22" />
              <path d="M2 4 L9 3 L9 7 M2 7 L6 7 L6 10 M9 7 L12 5" fill="none" stroke="#fff" strokeWidth="1.2" />
            </svg>
            <h1 className="text-[13px] leading-4">无标题 - SketchUp Pro 2018</h1>
          </div>
          <nav className="flex h-[21px] items-center gap-[15px] pt-[2px] pl-[7px]">
            {MENUS.map((menu) => (
              <button key={menu} type="button" className="leading-4 whitespace-nowrap">
                {menu}
              </button>
            ))}
          </nav>
        </header>

        <div className="flex h-[39px] shrink-0">
          <Panel>
            <div className="relative mr-1 h-[22px] w-[227px]">
              <select
                aria-label="类型"
                className="h-full w-full appearance-none border border-[#a3a3a3] bg-white pt-px pl-[3px] font-['DejaVu_Sans','Noto_Sans_CJK_SC',sans-serif] text-xs font-bold"
              >
                <option>类型：&lt;undefined&gt;</option>
              </select>
              <Chevron className="top-0 right-0 h-[22px] w-4" />
            </div>
            <ToolButton name="tags" onClick={() => setActive("tags")} />
          </Panel>
          <Panel className="pr-[3px]">
            <div className="relative h-5 w-[147px]">
              <select aria-label="Layer" className="h-full w-full appearance-none bg-white pt-[2px] pl-[26px] text-[11px]">
                <option>Layer0</option>
              </select>
              <svg viewBox="0 0 8 8" className="pointer-events-none absolute top-2 left-[9px] h-2 w-2">
                <path d="M0 4 L3 7 L8 1" fill="none" stroke="#000" strokeWidth="1.3" />
              </svg>
              <Chevron className="top-0 right-0 h-5 w-[14px]" />
            </div>
          </Panel>
          <Panel className="ml-[259px] pr-[2px]">
            <Tools names={["iso", "top", "front", "right", "back", "left"]} active={active} setActive={setActive} />
          </Panel>
          <Panel>
            <Tools names={["shell", "|", "intersect", "union", "subtract", "trim", "split"]} active={active} setActive={setActive} />
          </Panel>
        </div>

        <div className="flex h-[38px] shrink-0">
          <Panel className="ml-[149px]">
            <Tools names={DRAW_TOOLS} active={active} setActive={setActive} />
          </Panel>
          <Panel className="ml-[750px]">
            <ToolButton name="section" />
            <ToolButton name="sectionPlanes" />
            <ToolButton name="sectionCuts" active />
            <ToolButton name="sectionFill" active />
          </Panel>
        </div>

        <div className="flex h-[38px] shrink-0 overflow-hidden">
          <Panel>
            <Tools names={MAIN_TOOLS} active={active} setActive={setActive} />
          </Panel>
          <Panel>
            <Tools names={PLUGIN_TOOLS} active={active} setActive={setActive} />
          </Panel>
        </div>

        <div className="flex min-h-0 flex-1">
          <aside className="w-[72px] shrink-0 overflow-hidden pt-[90px]">
            <div className="border-t border-r border-b border-[#a9a9a9] border-t-[#fafafa] bg-[#f1f1f1] pl-[2px]">
              <div className="mx-[2px] mt-[2px] mb-1 border-t-2 border-dotted border-[#b4b4b4]" />
              {PALETTE.map((group, i) => (
                <div key={i}>
                  {i > 0 && (
                    <div className="h-2 pt-[2px]">
                      <div className="mx-[2px] h-px bg-[#7d7d7d]" />
                    </div>
                  )}
                  <div className="grid w-[68px] grid-cols-2">
                    <Tools names={group} active={active} setActive={setActive} />
                  </div>
                </div>
              ))}
            </div>
          </aside>
          <main className="min-w-0 flex-1 border-t-2 border-l-2 border-[#6a6a6a] bg-[#cccdc8]">
            <Scene />
          </main>
        </div>

        <footer className="flex h-[37px] shrink-0 border-t border-[#fafafa]">
          <div className="flex items-center border-r border-[#a9a9a9] bg-[#f1f1f1] pr-[3px]">
            <Grip />
            <label htmlFor="length" className="w-[127px] pl-[5px] text-[13px] leading-5">
              长度
            </label>
            <input
              id="length"
              value={length}
              onChange={(e) => setLength(e.target.value)}
              className="h-[17px] w-[156px] border border-[#a9b7d1] bg-white px-1 text-[11px] outline-none"
            />
          </div>
        </footer>
      </div>

      <Watermark />
    </div>
  );
};

export default App;
